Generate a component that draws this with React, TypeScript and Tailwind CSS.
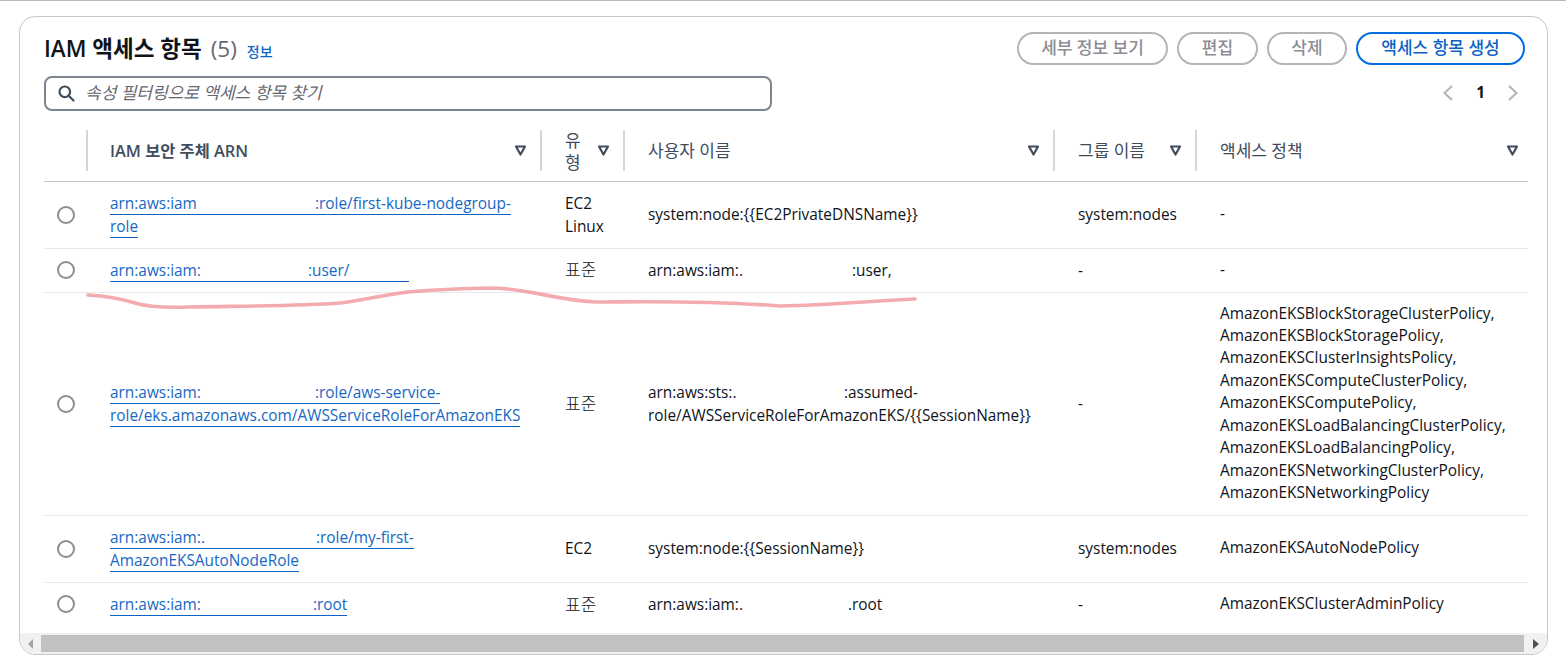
import React from "react";

const font = { fontFamily: '"Open Sans","Noto Sans CJK KR",sans-serif' };

function Sort() {
  return (
    <svg width="13" height="13" viewBox="0 0 13 13" className="shrink-0">
      <path d="M2 2.5h9L6.5 10.5z" fill="none" stroke="#414d5c" strokeWidth="2.2" strokeLinejoin="round" />
    </svg>
  );
}

function Th({ label, w, pl, pr }: { label: React.ReactNode; w: number; pl: string; pr: string }) {
  return (
    <th style={{ width: w }} className="p-0 border-b border-[#c6c6cd] align-top h-[51px]">
      <div className={`flex items-center justify-between h-[41px] border-l-2 border-[#d5d5da] text-left leading-[22px] text-[#414d5c] ${pl} ${pr}`}>
        <span className="pt-[2px]">{label}</span>
        <Sort />
      </div>
    </th>
  );
}

function Radio() {
  return <span className="block w-[18px] h-[18px] ml-[13px] rounded-full border-2 border-[#8c8c94]" />;
}

function Link({ lead, leadW, rest, second, tail }: { lead: string; leadW: number; rest: string; second?: string; tail?: number }) {
  return (
    <span className="text-[#1668c4]">
      <a className="border-b border-[#0b63c5]">
        <span className="inline-block" style={{ width: leadW }}>{lead}</span>
        {rest}
        {tail ? <span className="inline-block" style={{ width: tail }} /> : null}
      </a>
      {second && (
        <>
          <br />
          <a className="border-b border-[#0b63c5]">{second}</a>
        </>
      )}
    </span>
  );
}

function Row({ h, arn, type, user, group, policy }: { h: number; arn: React.ReactNode; type: React.ReactNode; user: React.ReactNode; group: string; policy: React.ReactNode }) {
  return (
    <tr style={{ height: h }} className="border-b border-[#e9e9ed] last:border-b-0">
      <td className="p-0 align-middle"><Radio /></td>
      <td className="p-0 pt-[2px] pl-[24px] align-middle">{arn}</td>
      <td className="p-0 pt-[2px] pl-[25px] align-middle">{type}</td>
      <td className="p-0 pt-[2px] pl-[25px] align-middle">{user}</td>
      <td className="p-0 pt-[2px] pl-[25px] align-middle">{group}</td>
      <td className="p-0 pl-[25px] align-middle">{policy}</td>
    </tr>
  );
}

export default function App() {
  const policies = [
    "AmazonEKSBlockStorageClusterPolicy,",
    "AmazonEKSBlockStoragePolicy,",
    "AmazonEKSClusterInsightsPolicy,",
    "AmazonEKSComputeClusterPolicy,",
    "AmazonEKSComputePolicy,",
    "AmazonEKSLoadBalancingClusterPolicy,",
    "AmazonEKSLoadBalancingPolicy,",
    "AmazonEKSNetworkingClusterPolicy,",
    "AmazonEKSNetworkingPolicy",
  ];
  const btn = "h-[33px] rounded-full border-2 font-medium text-[17px] flex items-center justify-center";
  const gray = "border-[#b4b4bb] text-[#8c8c94]";
  const ko = "text-[17px]";
  const std = <span className="text-[17px] font-light">표준</span>;
  return (
    <div style={font} className="relative w-[1566px] h-[660px] bg-white overflow-hidden border-t border-[#b8bcc2] text-[15.4px] leading-[22.4px] text-[#0f141a]">
      <div className="mt-[15px] ml-[19px] w-[1529px] h-[639px] rounded-[16px] border border-[#c6c6cd] overflow-hidden flex flex-col">
        <div className="flex justify-between pl-[24px] pr-[22px] pt-[15px] h-[58px]">
          <div className="flex items-baseline pt-[1px]">
            <span className="text-[22.5px] leading-[32px] font-semibold">IAM 액세스 항목</span>
            <span className="text-[22.5px] leading-[32px] text-[#656871] ml-[9px]">(5)</span>
            <span className="text-[14px] font-medium text-[#0b63c5] ml-[10px]">정보</span>
          </div>
          <div className="flex gap-[9px]">
            <div className={`${btn} ${gray} w-[151px]`}>세부 정보 보기</div>
            <div className={`${btn} ${gray} w-[81px]`}>편집</div>
            <div className={`${btn} ${gray} w-[80px]`}>삭제</div>
            <div className={`${btn} w-[169px] border-[#006ce0] text-[#0b63c5]`}>액세스 항목 생성</div>
          </div>
        </div>
        <div className="flex justify-between items-center pl-[24px] pr-[28px] h-[36px]">
          <div className="w-[728px] h-[35px] rounded-[8px] border-2 border-[#7d8590] flex items-center pl-[11px]">
            <svg width="18" height="18" viewBox="0 0 18 18" fill="none" stroke="#414d5c" strokeWidth="2.2" strokeLinecap="round">
              <circle cx="7.8" cy="7.8" r="5.3" />
              <path d="M12 12l4.5 4.5" />
            </svg>
            <span className={`ml-[10px] italic text-[#656871] ${ko}`}>속성 필터링으로 액세스 항목 찾기</span>
          </div>
          <div className="flex items-center gap-[22px]">
            <svg width="12" height="18" viewBox="0 0 12 18" fill="none" stroke="#b4b4bb" strokeWidth="2"><path d="M10 2L2.5 9l7.5 7" /></svg>
            <span className="font-bold text-[#0f141a]">1</span>
            <svg width="12" height="18" viewBox="0 0 12 18" fill="none" stroke="#b4b4bb" strokeWidth="2"><path d="M2 2l7.5 7L2 16" /></svg>
          </div>
        </div>
        <div className="flex-1 min-h-0 pl-[24px] pr-[19px] pt-[19px] overflow-hidden">
          <table className="table-fixed border-collapse w-[1484px]">
            <thead>
              <tr>
                <th className="p-0 w-[42px] border-b border-[#c6c6cd]" />
                <Th w={454} pl="pl-[22px]" pr="pr-[13px]" label={<span className="text-[16.4px] font-semibold">IAM 보안 주체 ARN</span>} />
                <Th w={83} pl="pl-[23px]" pr="pr-[13px]" label={<span className={`block w-[18px] font-normal ${ko}`}>유형</span>} />
                <Th w={430} pl="pl-[23px]" pr="pr-[13px]" label={<span className={`font-normal ${ko}`}>사용자 이름</span>} />
                <Th w={142} pl="pl-[23px]" pr="pr-[13px]" label={<span className={`font-normal ${ko}`}>그룹 이름</span>} />
                <Th w={333} pl="pl-[23px]" pr="pr-[9px]" label={<span className={`font-normal ${ko}`}>액세스 정책</span>} />
              </tr>
            </thead>
            <tbody>
              <Row h={67} arn={<Link lead="arn:aws:iam" leadW={205} rest=":role/first-kube-nodegroup-" second="role" />} type={<>EC2<br />Linux</>} user="system:node:{{EC2PrivateDNSName}}" group="system:nodes" policy="-" />
              <Row h={44} arn={<Link lead="arn:aws:iam:" leadW={198} rest=":user/" tail={60} />} type={std} user={<><span className="inline-block w-[204px]">arn:aws:iam:.</span>:user,</>} group="-" policy="-" />
              <Row h={223} arn={<Link lead="arn:aws:iam:" leadW={205} rest=":role/aws-service-" second="role/eks.amazonaws.com/AWSServiceRoleForAmazonEKS" />} type={std} user={<><span className="inline-block w-[196px]">arn:aws:sts:.</span>:assumed-<br />role/AWSServiceRoleForAmazonEKS/{"{{SessionName}}"}</>} group="-" policy={policies.map((p) => <div key={p}>{p}</div>)} />
              <Row h={67} arn={<Link lead="arn:aws:iam:." leadW={206} rest=":role/my-first-" second="AmazonEKSAutoNodeRole" />} type="EC2" user="system:node:{{SessionName}}" group="system:nodes" policy="AmazonEKSAutoNodePolicy" />
              <Row h={44} arn={<Link lead="arn:aws:iam:" leadW={203} rest=":root" />} type={std} user={<><span className="inline-block w-[200px]">arn:aws:iam:.</span>.root</>} group="-" policy="AmazonEKSClusterAdminPolicy" />
            </tbody>
          </table>
        </div>
        <div className="h-[21px] shrink-0 bg-[#f1f1f1] flex items-center">
          <div className="w-[21px] flex justify-center">
            <svg width="6" height="10" viewBox="0 0 6 10"><path d="M5 0v10L0 5z" fill="#a3a3a3" /></svg>
          </div>
          <div className="flex-1 h-[17px] bg-[#c1c1c1]" />
          <div className="w-[23px] flex justify-center">
            <svg width="6" height="10" viewBox="0 0 6 10"><path d="M0 0v10l6-5z" fill="#505050" /></svg>
          </div>
        </div>
      </div>
      <svg className="absolute left-0 top-0 pointer-events-none" width="1566" height="660" fill="none">
        <path d="M88 294 C105 295 122 298 135 302 C148 306 165 307 190 306 C240 305 300 305 340 302 C370 298 390 292 420 290 C450 288 475 287 495 287 C530 288 555 299 595 301 C640 301 700 299 780 305 C830 304 870 300 915 298" stroke="#f08f96" strokeOpacity="0.75" strokeWidth="3.6" strokeLinecap="round" />
      </svg>
    </div>
  );
}
